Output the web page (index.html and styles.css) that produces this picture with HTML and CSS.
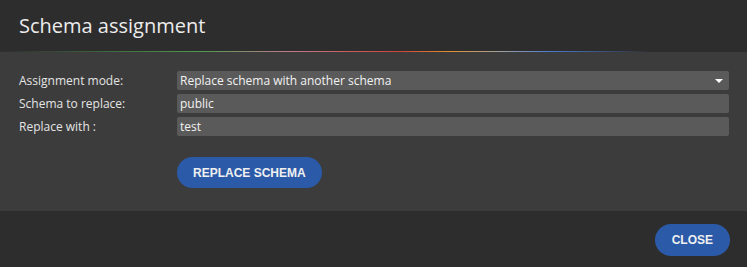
FILE: index.html
```html
<!DOCTYPE html>
<html lang="en">

<head>
  <meta charset="UTF-8">
  <title>Schema assignment</title>
  <link rel="stylesheet" href="styles.css">
</head>

<body>
  <div class="dialog">
    <div class="dialog-header">
      <h1>Schema assignment</h1>
    </div>
    <div class="dialog-body">
      <div class="form">
        <label class="text">Assignment mode:</label>
        <div class="field select">
          <span>Replace schema with another schema</span>
          <span class="arrow"></span>
        </div>
        <label class="text">Schema to replace:</label>
        <div class="field">public</div>
        <label class="text">Replace with :</label>
        <div class="field">test</div>
        <div></div>
        <div class="actions">
          <button class="btn">REPLACE SCHEMA</button>
        </div>
      </div>
    </div>
    <div class="dialog-footer">
      <button class="btn close">CLOSE</button>
    </div>
  </div>
</body>

</html>
```

FILE: styles.css
```css
* {
  padding: 0;
  margin: 0;
  box-sizing: border-box;
}

body {
  font-family: "Open Sans", sans-serif;
  background-color: #2d2d2d;
  color: #e8e8e8;
}

.dialog {
  width: 747px;
  height: 267px;
  display: flex;
  flex-direction: column;
}

.dialog-header {
  height: 52px;
  padding: 12px 19px 0;
  background-color: #2d2d2d;
  border-bottom: 1px solid transparent;
  border-image: linear-gradient(to right, transparent 0, #4e9a4e 200px, #c27a8c 290px, #d04438 400px, #e09030 450px, #a0a0a0 500px, #4a7ad0 550px, transparent 650px) 1;
}

h1 {
  font-size: 20px;
  font-weight: 400;
  color: #ececec;
}

.dialog-body {
  height: 159px;
  background-color: #3c3c3c;
  padding: 19px 18px 0 19px;
}

.form {
  display: grid;
  grid-template-columns: 158px 1fr;
  row-gap: 4px;
  align-items: center;
}

.text {
  font-size: 12px;
  color: #e4e4e4;
}

.field {
  height: 19px;
  background-color: #5a5a5a;
  border-radius: 2px;
  padding: 0 3px;
  font-size: 12px;
  line-height: 19px;
  color: #f2f2f2;
}

.select {
  display: flex;
  justify-content: space-between;
  align-items: center;
}

.arrow {
  width: 0;
  height: 0;
  margin-right: 3px;
  border-left: 4px solid transparent;
  border-right: 4px solid transparent;
  border-top: 4px solid #fff;
}

.actions {
  padding-top: 17px;
}

.btn {
  font-family: "Liberation Sans", Arial, sans-serif;
  font-size: 12px;
  font-weight: 700;
  color: #f0f0f0;
  background-color: #2b5aa8;
  border: none;
  border-radius: 16px;
  height: 31px;
  padding: 0 16px;
}

.dialog-footer {
  flex: 1;
  display: flex;
  justify-content: flex-end;
  align-items: flex-start;
  padding: 13px 17px 0 0;
  background-color: #2d2d2d;
}

.close {
  height: 32px;
  padding: 0 17px;
}
```
